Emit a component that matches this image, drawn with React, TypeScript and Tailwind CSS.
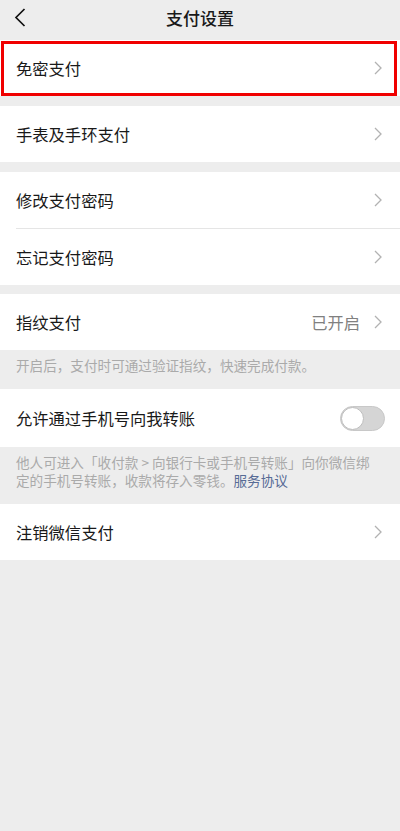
import React from "react";

const font = { fontFamily: '"Noto Sans CJK SC", "Noto Sans", sans-serif' };

const Chevron = () => (
  <svg width="8" height="14" viewBox="0 0 8 14" className="shrink-0">
    <path d="M1 1l6 6-6 6" fill="none" stroke="#b2b2b2" strokeWidth="1.3" />
  </svg>
);

const Row = ({ label, value, right }: { label: string; value?: string; right?: React.ReactNode }) => (
  <div className="h-[56px] flex items-center justify-between pl-4 pr-[18px] bg-white">
    <span className="text-[16.3px] text-[#191919]">{label}</span>
    <div className="flex items-center gap-[14px]">
      {value && <span className="text-[16.3px] text-[#808080]">{value}</span>}
      {right ?? <Chevron />}
    </div>
  </div>
);

const Toggle = () => (
  <div className="w-[45px] h-[25px] rounded-full bg-[#d5d5d5] border border-[#c8c8c8] flex items-center -mr-[3px]">
    <div className="w-[23px] h-[23px] rounded-full bg-white border border-[#bdbdbd]" />
  </div>
);

export default function App() {
  return (
    <div className="w-[400px] h-[831px] bg-[#ededed]" style={font}>
      {/* header */}
      <div className="h-[40px] pb-[5px] relative flex items-center justify-center">
        <svg width="12" height="19" viewBox="0 0 12 19" className="absolute left-[14px] top-[8px]">
          <path d="M10.5 1L2 9.5l8.5 8.5" fill="none" stroke="#111" strokeWidth="1.7" />
        </svg>
        <span className="text-[17px] font-medium text-[#191919]">支付设置</span>
      </div>

      <div className="relative">
        <Row label="免密支付" />
        <div className="absolute left-[1px] top-[1px] w-[396px] h-[55px] border-[3px] border-[#f00000]" />
      </div>

      <div className="h-[10px]" />
      <Row label="手表及手环支付" />

      <div className="h-[10px]" />
      <Row label="修改支付密码" />
      <div className="bg-white pl-4">
        <div className="h-px bg-[#e5e5e5]" />
      </div>
      <Row label="忘记支付密码" />

      <div className="h-[9px]" />
      <Row label="指纹支付" value="已开启" />
      <div className="pt-[6px] pb-[15px] px-4 text-[13.6px] leading-[18px] text-[#aaaaaa]">
        开启后，支付时可通过验证指纹，快速完成付款。
      </div>

      <div className="h-[58px] flex items-center justify-between pl-4 pr-[18px] bg-white">
        <span className="text-[16.3px] text-[#191919]">允许通过手机号向我转账</span>
        <Toggle />
      </div>
      <div className="pt-[6px] pb-[15px] pl-4 pr-[18px] text-[13.6px] leading-[18px] text-[#aaaaaa]">
        <p>他人可进入「收付款 &gt; 向银行卡或手机号转账」向你微信绑</p>
        <p>
          定的手机号转账，收款将存入零钱。<span className="text-[#576b95]">服务协议</span>
        </p>
      </div>

      <Row label="注销微信支付" />
    </div>
  );
}
